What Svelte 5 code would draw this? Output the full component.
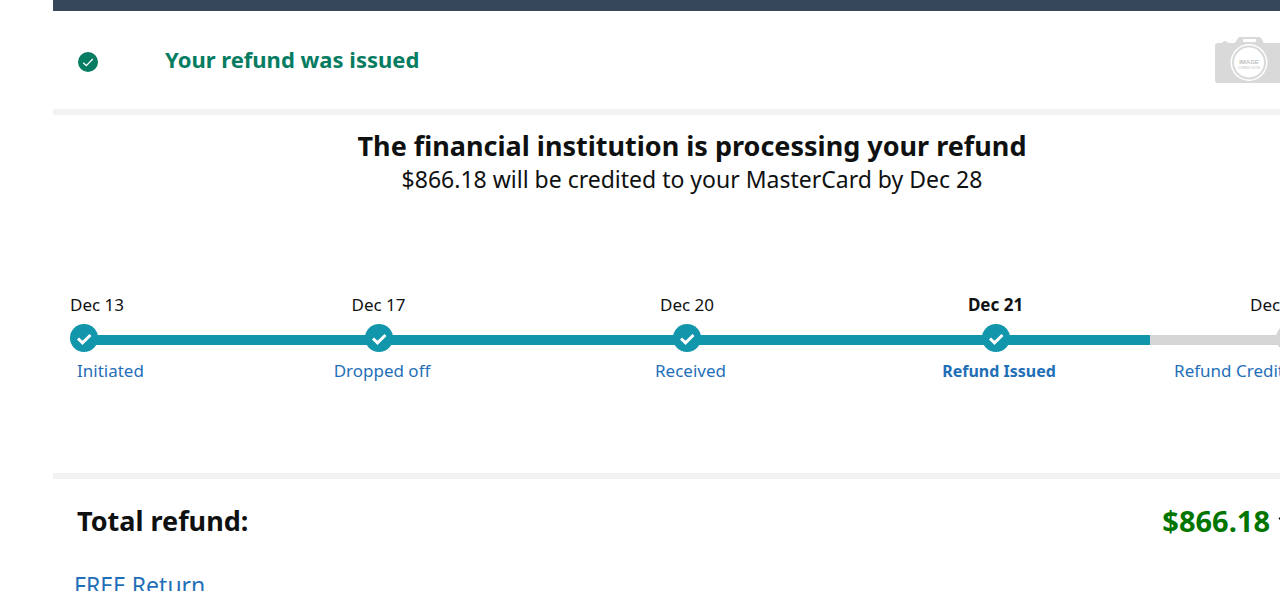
<script lang="ts">
  interface Step {
    date: string;
    label: string;
    done: boolean;
    current?: boolean;
  }

  const amount = '$866.18';

  const steps: Step[] = [
    { date: 'Dec 13', label: 'Initiated', done: true },
    { date: 'Dec 17', label: 'Dropped off', done: true },
    { date: 'Dec 20', label: 'Received', done: true },
    { date: 'Dec 21', label: 'Refund Issued', done: true, current: true },
    { date: 'Dec 28', label: 'Refund Credited', done: false },
  ];

  let expanded = $state(false);
</script>

<div class="page">
  <div class="topbar"></div>

  <header class="status">
    <svg class="status-icon" viewBox="0 0 20 20" aria-hidden="true">
      <circle cx="10" cy="10" r="10" fill="#067d62" />
      <path d="M5.2 10.8 L8.3 13.6 L14.8 7" fill="none" stroke="#fff" stroke-width="1.3" />
    </svg>
    <h1 class="status-title">Your refund was issued</h1>
    <svg class="camera" viewBox="0 0 80 46" role="img" aria-label="Image coming soon">
      <path
        fill="#d9d9d9"
        d="M3 6 H7 Q8 4 10 4 Q12 4 13 6 H20 L23 1 Q23.5 0 25 0 H44 Q45.5 0 46 1 L49 6 H77 Q80 6 80 9 V43 Q80 46 77 46 H3 Q0 46 0 43 V9 Q0 6 3 6 Z"
      />
      <rect x="28" y="2" width="13" height="3" rx="1" fill="#fff" />
      <circle cx="34" cy="25.5" r="18.5" fill="#fff" />
      <circle cx="34" cy="25.5" r="16" fill="#fff" stroke="#d9d9d9" stroke-width="2" />
      <text class="camera-big" x="34" y="27" text-anchor="middle">IMAGE</text>
      <text class="camera-small" x="34" y="32" text-anchor="middle">COMING SOON</text>
    </svg>
  </header>

  <section class="progress">
    <h2 class="heading">The financial institution is processing your refund</h2>
    <p class="subheading">{amount} will be credited to your MasterCard by Dec 28</p>

    <ol class="steps">
      {#each steps as step (step.label)}
        <li class="step" class:done={step.done} class:current={step.current}>
          <span class="date">{step.date}</span>
          <div class="track">
            <svg class="dot" viewBox="0 0 28 28" aria-hidden="true">
              <circle cx="14" cy="14" r="14" />
              {#if step.done}
                <path d="M8 14.5 L12.5 18.8 L20.5 11" />
              {/if}
            </svg>
          </div>
          <a class="label" href="#{step.label.toLowerCase().replace(' ', '-')}">{step.label}</a>
        </li>
      {/each}
    </ol>
  </section>

  <section class="summary">
    <div class="total">
      <h2 class="total-title">Total refund:</h2>
      <button class="total-amount" aria-expanded={expanded} onclick={() => (expanded = !expanded)}>
        {amount}
        <svg class="chevron" viewBox="0 0 16 10" aria-hidden="true">
          <path d="M1.5 1.5 L8 8 L14.5 1.5" />
        </svg>
      </button>
    </div>
    <a class="return" href="#return">FREE Return</a>
  </section>
</div>

<style>
  :global(body) {
    background: #fff;
    overflow: hidden;
  }

  .page {
    margin-left: 53px;
    margin-right: -51px;
    color: #0f1111;
    font-family: 'Noto Sans', 'Open Sans', sans-serif;
  }

  h1,
  h2,
  p,
  ol {
    margin: 0;
    padding: 0;
  }

  a {
    color: #1f6fb8;
    text-decoration: none;
  }

  .topbar {
    height: 11px;
    background: #37475a;
  }

  .status {
    display: flex;
    align-items: center;
    height: 98px;
    padding: 0 36px 0 25px;
  }

  .status-icon {
    width: 20px;
    height: 20px;
    margin-top: 4px;
  }

  .status-title {
    flex: 1;
    margin: 0 0 2px 67px;
    color: #067d62;
    font-size: 22px;
    line-height: 32px;
  }

  .camera {
    width: 80px;
    height: 46px;
  }

  .camera text {
    fill: #c0c0c0;
    font-family: 'Liberation Sans', sans-serif;
  }

  .camera .camera-big {
    font-size: 6px;
    font-weight: 700;
  }

  .camera .camera-small {
    font-size: 3px;
  }

  .progress {
    padding: 14px 27px 90px 17px;
    border-top: 6px solid #f2f2f2;
    border-bottom: 6px solid #f2f2f2;
  }

  .heading,
  .subheading {
    padding-left: 10px;
    text-align: center;
  }

  .heading {
    font-size: 27px;
    line-height: 33px;
  }

  .subheading {
    font-size: 23px;
    line-height: 34px;
  }

  .steps {
    display: grid;
    grid-template-columns: 1fr 2fr 2fr 2fr 1fr;
    margin-top: 97px;
    list-style: none;
  }

  .step {
    display: flex;
    flex-direction: column;
    align-items: center;
    font-size: 17px;
    line-height: 24px;
    white-space: nowrap;
  }

  .step:first-child {
    align-items: flex-start;
  }

  .step:last-child {
    align-items: flex-end;
  }

  .track {
    display: flex;
    align-self: stretch;
    justify-content: center;
    margin: 7px 0;
    background: linear-gradient(#d5d5d5, #d5d5d5) 0 11px / 100% 10px no-repeat;
  }

  .done .track {
    background-image: linear-gradient(#1196ab, #1196ab);
  }

  .step:first-child .track {
    justify-content: flex-start;
    background-position-x: 14px;
  }

  .step:last-child .track {
    justify-content: flex-end;
  }

  .dot {
    width: 28px;
    height: 28px;
  }

  .dot circle {
    fill: #d5d5d5;
  }

  .done .dot circle {
    fill: #1196ab;
  }

  .dot path {
    fill: none;
    stroke: #fff;
    stroke-width: 3;
  }

  .label {
    padding-left: 7px;
  }

  .current {
    font-weight: 700;
  }

  .current .label {
    font-size: 16px;
  }

  .summary {
    padding: 24px 37px 24px 21px;
  }

  .total {
    display: flex;
    align-items: center;
    justify-content: space-between;
    padding-left: 3px;
  }

  .total-title {
    font-size: 27px;
    line-height: 36px;
  }

  .total-amount {
    display: flex;
    align-items: center;
    gap: 8px;
    padding: 0;
    border: none;
    background: none;
    color: #007600;
    font: inherit;
    font-size: 29px;
    font-weight: 700;
    line-height: 36px;
    cursor: pointer;
  }

  .chevron {
    width: 16px;
    height: 10px;
  }

  .chevron path {
    fill: none;
    stroke: #0f1111;
    stroke-width: 3;
  }

  .return {
    display: inline-block;
    margin-top: 30px;
    font-size: 23px;
    line-height: 32px;
  }
</style>
